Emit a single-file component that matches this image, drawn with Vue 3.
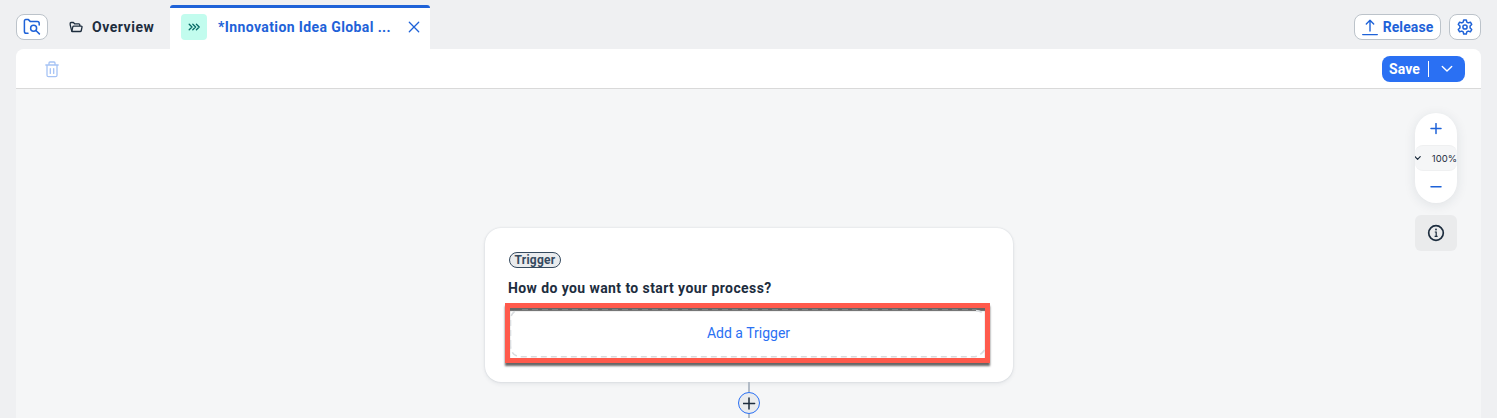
<script setup>
import { ref } from 'vue'

const zoomLevel = ref('100%')
const tabTitle = ref('*Innovation Idea Global ...')
</script>

<template>
  <div class="app">
    <header class="topbar">
      <button class="outline square" aria-label="Search artifacts">
        <svg width="18" height="18" viewBox="0 0 18 18" fill="none" stroke="#1e62d8" stroke-width="1.5" stroke-linecap="round" stroke-linejoin="round">
          <path d="M5 15.3H3.2Q1.4 15.3 1.4 13.5V3Q1.4 1.6 2.8 1.6H5.4L7.4 3.6H14.4Q16.2 3.6 16.2 5.4V7" />
          <circle cx="10.6" cy="10.2" r="3" />
          <path d="M12.9 12.5L16.4 15.9" />
        </svg>
      </button>
      <div class="overview">
        <svg width="14" height="12" viewBox="0 0 14 12" fill="none" stroke="#1d2d3e" stroke-width="1.3" stroke-linejoin="round">
          <path d="M2.8 10.4L1.2 3.8V2.3Q1.2 1.5 2 1.5H4.4L5.6 2.8H9.8Q10.8 2.8 10.8 3.8V5" />
          <path d="M2.8 10.4L3.8 5.9Q4 5.1 4.8 5.1H12.2Q13.2 5.1 13 6.1L12.3 9.5Q12.1 10.5 11.2 10.5H3.2Q2.8 10.5 2.8 10.4Z" />
        </svg>
        <span class="label">Overview</span>
      </div>
      <div class="tab">
        <span class="process">
          <svg width="13" height="8" viewBox="0 0 13 8" fill="none" stroke="#066b66" stroke-width="1.3" stroke-linecap="round" stroke-linejoin="round">
            <path d="M1.2 1.2L4 4L1.2 6.8M4.8 1.2L7.6 4L4.8 6.8M8.4 1.2L11.2 4L8.4 6.8" />
          </svg>
        </span>
        <span class="title">{{ tabTitle }}</span>
        <svg class="close" width="12" height="12" viewBox="0 0 12 12" fill="none" stroke="#1e62d8" stroke-width="1.3" stroke-linecap="round">
          <path d="M1.3 1.3L10.7 10.7M10.7 1.3L1.3 10.7" />
        </svg>
      </div>
      <div class="actions">
        <button class="outline release">
          <svg width="16" height="17" viewBox="0 0 16 17" fill="none" stroke="#1e62d8" stroke-width="1.4" stroke-linecap="round" stroke-linejoin="round">
            <path d="M8 12V1.2M4.3 4.9L8 1.2L11.7 4.9" />
            <path d="M.7 15.6H15.3" />
          </svg>
          <span class="release-text">Release</span>
        </button>
        <button class="outline square" aria-label="Settings">
          <svg width="16" height="16" viewBox="0 0 16 16" fill="none" stroke="#1e62d8" stroke-width="1.5" stroke-linejoin="round">
            <path d="M6.7 .9H9.3L9.8 3.1L11.2 3.9L13.4 3.2L14.7 5.4L13.1 7.1V8.9L14.7 10.6L13.4 12.8L11.2 12.1L9.8 12.9L9.3 15.1H6.7L6.2 12.9L4.8 12.1L2.6 12.8L1.3 10.6L2.9 8.9V7.1L1.3 5.4L2.6 3.2L4.8 3.9L6.2 3.1Z" />
            <circle cx="8" cy="8" r="2.1" />
          </svg>
        </button>
      </div>
    </header>

    <main class="panel">
      <div class="toolbar">
        <svg class="trash" width="14" height="17" viewBox="0 0 14 17" fill="none" stroke="#a6c3f5" stroke-width="1.3" stroke-linecap="round" stroke-linejoin="round">
          <path d="M.8 4H13.2M4 3.8V2Q4 1 5 1H9Q10 1 10 2V3.8M2 4.2V14.2Q2 15.7 3.5 15.7H10.5Q12 15.7 12 14.2V4.2M5.3 7.6V12.4M8.7 7.6V12.4" />
        </svg>
        <button class="save">
          <span class="save-text">Save</span>
          <span class="divider"></span>
          <svg width="12" height="8" viewBox="0 0 12 8" fill="none" stroke="#fff" stroke-width="1.4" stroke-linecap="round" stroke-linejoin="round">
            <path d="M1.3 1.4L6 6L10.7 1.4" />
          </svg>
        </button>
      </div>

      <div class="canvas">
        <div class="flow">
          <section class="card">
            <span class="badge"><span class="badge-text">Trigger</span></span>
            <h2>How do you want to start your process?</h2>
            <div class="highlight">
              <svg class="dashes" width="475" height="50" viewBox="0 0 475 50" fill="none" stroke="#d9dcdf" stroke-width="1.6" stroke-dasharray="6 4">
                <path d="M.5 38V12Q.5 5 7 2M474.5 42Q470 48.8 463 48.8H12Q1 48.8 .5 38M466 2.6Q471 3 474.5 6" />
                <path d="M12 1.6H466" stroke="#858789" stroke-width="1" />
              </svg>
              <a class="add">Add a Trigger</a>
            </div>
          </section>
          <div class="line"></div>
          <div class="plus">
            <svg width="13" height="13" viewBox="0 0 13 13" stroke="#1d2d3e" stroke-width="1.5" stroke-linecap="round">
              <path d="M6 .9V12.1M.4 6.5H11.6" />
            </svg>
          </div>
          <div class="line"></div>
        </div>

        <aside class="controls">
          <div class="zoom">
            <div class="step">
              <svg width="12" height="12" viewBox="0 0 12 12" stroke="#1e62d8" stroke-width="1.5" stroke-linecap="round">
                <path d="M6 .6V10.6M1 5.6H11" />
              </svg>
            </div>
            <div class="level">
              <svg width="7" height="5" viewBox="0 0 7 5" fill="none" stroke="#1d2d3e" stroke-width="1.2" stroke-linecap="round" stroke-linejoin="round">
                <path d="M0 .6L2.6 3.3L5.2 .6" />
              </svg>
              <span>{{ zoomLevel }}</span>
            </div>
            <div class="step">
              <svg width="12" height="2" viewBox="0 0 12 2" stroke="#1e62d8" stroke-width="1.5" stroke-linecap="round">
                <path d="M1 .8H11" />
              </svg>
            </div>
          </div>
          <div class="info">
            <svg width="18" height="18" viewBox="0 0 18 18" fill="none" stroke="#1d2d3e" stroke-width="1.7">
              <circle cx="9" cy="9" r="7.3" />
              <path d="M7.8 8H9.2V12.2M7.6 12.3H10.6" stroke-width="1.2" />
              <circle cx="9" cy="5.5" r=".9" fill="#1d2d3e" stroke="none" />
            </svg>
          </div>
        </aside>
      </div>
    </main>
  </div>
</template>

<style>
body {
  margin: 0;
  overflow: hidden;
}
</style>

<style scoped>
.app {
  box-sizing: border-box;
  width: 1497px;
  height: 418px;
  padding: 0 16px;
  overflow: hidden;
  background: #eff0f2;
  color: #1d2d3e;
  font-family: Roboto, "Liberation Sans", sans-serif;
  font-size: 14px;
}
.app * {
  box-sizing: border-box;
}
svg {
  display: block;
  flex: none;
}
button {
  margin: 0;
  padding: 0;
  font: inherit;
  font-weight: 700;
}
span, a, h2 {
  white-space: nowrap;
}
.topbar {
  display: flex;
  height: 49px;
  padding-top: 5px;
}
.outline {
  display: flex;
  align-items: center;
  justify-content: center;
  height: 26px;
  margin-top: 9px;
  border: 1px solid #bcc3ca;
  border-radius: 8px;
  background: #fff;
  color: #1e62d8;
}
.square {
  width: 32px;
}
.overview {
  display: flex;
  align-items: center;
  gap: 9px;
  width: 122px;
  padding-left: 21px;
  font-weight: 700;
}
.label {
  letter-spacing: 0.52px;
}
.tab {
  display: flex;
  align-items: center;
  width: 260px;
  height: 44px;
  padding: 0 10px 0 11px;
  border-top: 3px solid #1e62d8;
  border-radius: 3px 3px 0 0;
  background: #fff;
  color: #1e62d8;
  font-weight: 700;
}
.process {
  display: flex;
  align-items: center;
  justify-content: center;
  width: 26px;
  height: 26px;
  margin: -3px 11px 0 0;
  border-radius: 4px;
  background: #c2fcee;
}
.title {
  margin-top: -3px;
  letter-spacing: 0.39px;
}
.close {
  margin: -3px 0 0 auto;
}
.actions {
  display: flex;
  gap: 8px;
  margin-left: auto;
}
.release {
  gap: 5px;
  width: 87px;
}
.release-text {
  letter-spacing: 0.1px;
}
.panel {
  height: 369px;
  border-radius: 8px 8px 0 0;
  background: #f5f6f7;
  overflow: hidden;
}
.toolbar {
  display: flex;
  align-items: center;
  justify-content: space-between;
  height: 40px;
  padding: 0 16px 0 29px;
  border-bottom: 1px solid #d9d9d9;
  background: #fff;
}
.trash {
  margin-top: 2px;
}
.save {
  display: flex;
  align-items: center;
  width: 83px;
  height: 26px;
  padding-left: 7px;
  border: 0;
  border-radius: 8px;
  background: #2a70f3;
  color: #fff;
}
.save-text {
  width: 39px;
  text-align: left;
  letter-spacing: 0.1px;
}
.divider {
  width: 1px;
  height: 16px;
  margin-right: 12px;
  background: #fff;
}
.canvas {
  display: grid;
  grid-template-columns: 469px 528px 1fr;
  height: 329px;
}
.flow {
  grid-column: 2;
  display: flex;
  flex-direction: column;
  align-items: center;
  padding-top: 139px;
}
.card {
  flex: none;
  width: 528px;
  height: 154px;
  padding: 24px 20px 0;
  border-radius: 16px;
  background: #fff;
  box-shadow: 0 0 2px rgba(34, 53, 72, 0.16), 0 2px 4px rgba(34, 53, 72, 0.08);
}
.badge {
  display: flex;
  align-items: center;
  justify-content: center;
  width: 52px;
  height: 16px;
  margin-left: 4px;
  border: 1px solid #354a5f;
  border-radius: 8px;
  background: #eaecee;
  color: #354a5f;
  font-size: 12px;
  font-weight: 700;
  letter-spacing: 0.25px;
  line-height: 14px;
}
h2 {
  margin: 10px 0 0 3px;
  font-size: 14px;
  font-weight: 700;
  letter-spacing: 0.41px;
  line-height: 20px;
}
.highlight {
  position: relative;
  display: flex;
  align-items: center;
  justify-content: center;
  width: 485px;
  height: 60px;
  margin-top: 5px;
  border: 5px solid #ff5a4c;
  box-shadow: 0 3px 2px rgba(0, 0, 0, 0.6), inset 0 3px 1px rgba(0, 0, 0, 0.6);
}
.dashes {
  position: absolute;
  inset: 0;
}
.add {
  margin-left: 2px;
  color: #2a70f3;
}
.line {
  flex: none;
  width: 2px;
  height: 10px;
  background: #b3bcc7;
}
.plus {
  display: flex;
  flex: none;
  align-items: center;
  justify-content: center;
  width: 22px;
  height: 22px;
  border: 1px solid #2a70f3;
  border-radius: 50%;
  background: #eaecee;
}
.controls {
  grid-column: 3;
  justify-self: end;
  width: 42px;
  margin: 24px 24px 0 0;
}
.zoom {
  display: flex;
  flex-direction: column;
  height: 90px;
  border-radius: 21px;
  background: #fff;
  box-shadow: 0 2px 12px rgba(34, 53, 72, 0.1);
}
.step {
  display: flex;
  align-items: center;
  justify-content: center;
  height: 32px;
}
.level {
  display: flex;
  align-items: center;
  justify-content: space-between;
  height: 26px;
  border: 1px solid #eff0f1;
  border-width: 1px 0;
  border-radius: 8px;
  background: #f5f6f7;
  font-family: Inter, "Liberation Sans", sans-serif;
  font-size: 9.5px;
}
.info {
  display: flex;
  align-items: center;
  justify-content: center;
  height: 36px;
  margin-top: 12px;
  border-radius: 6px;
  background: #eaebec;
}
</style>
